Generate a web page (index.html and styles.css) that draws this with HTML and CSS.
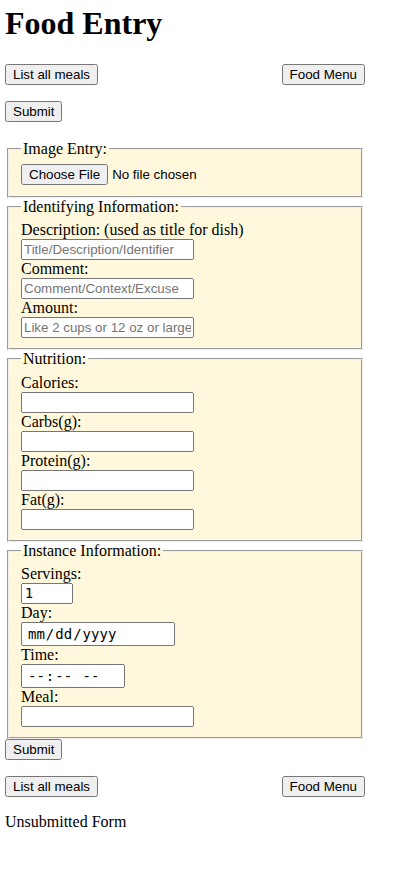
FILE: index.html
```html
<!DOCTYPE html>
<html>
<head>
<meta charset="utf-8">
<title>Food Entry</title>
<link rel="stylesheet" href="styles.css">
</head>
<body>
<div class="page">
  <h1 class="title">Food Entry</h1>
  <div class="nav">
    <button type="button" class="btn">List all meals</button>
    <button type="button" class="btn">Food Menu</button>
  </div>
  <form class="entry-form">
    <div class="submit-row"><button type="submit" class="btn">Submit</button></div>
    <fieldset class="group group-image">
      <legend class="group-legend">Image Entry:</legend>
      <input type="file" class="file-input">
    </fieldset>
    <fieldset class="group">
      <legend class="group-legend">Identifying Information:</legend>
      <label class="field-label">Description: (used as title for dish)</label><br>
      <input type="text" class="text-input" placeholder="Title/Description/Identifier"><br>
      <label class="field-label">Comment:</label><br>
      <input type="text" class="text-input" placeholder="Comment/Context/Excuse"><br>
      <label class="field-label">Amount:</label><br>
      <input type="text" class="text-input" placeholder="Like 2 cups or 12 oz or large">
    </fieldset>
    <fieldset class="group">
      <legend class="group-legend">Nutrition:</legend>
      <label class="field-label">Calories:</label><br>
      <input type="text" class="text-input"><br>
      <label class="field-label">Carbs(g):</label><br>
      <input type="text" class="text-input"><br>
      <label class="field-label">Protein(g):</label><br>
      <input type="text" class="text-input"><br>
      <label class="field-label">Fat(g):</label><br>
      <input type="text" class="text-input">
    </fieldset>
    <fieldset class="group">
      <legend class="group-legend">Instance Information:</legend>
      <label class="field-label">Servings:</label><br>
      <input type="number" class="num-input" value="1"><br>
      <label class="field-label">Day:</label><br>
      <input type="date" class="mono-input date-input"><br>
      <label class="field-label">Time:</label><br>
      <input type="time" class="mono-input time-input"><br>
      <label class="field-label">Meal:</label><br>
      <input type="text" class="text-input">
    </fieldset>
    <button type="submit" class="btn">Submit</button>
  </form>
  <div class="nav">
    <button type="button" class="btn">List all meals</button>
    <button type="button" class="btn">Food Menu</button>
  </div>
  <p class="status">Unsubmitted Form</p>
</div>
</body>
</html>
```

FILE: styles.css
```css
body {
  margin: 5px;
  font-family: "Liberation Serif", serif;
  font-size: 16px;
  color: #000;
  background: #fff;
}
.page {
  width: 360px;
}
.title {
  margin: 0 0 22px;
  font-size: 32px;
  line-height: 37px;
  font-weight: bold;
}
.nav {
  display: flex;
  justify-content: space-between;
  align-items: flex-start;
  margin: 16px 0;
}
.submit-row {
  margin: 0 0 18px;
}
.entry-form {
  margin: 0;
}
.btn,
.file-input,
.text-input {
  font-family: "Liberation Sans", Arial, sans-serif;
  font-size: 13.333px;
}
.btn {
  box-sizing: border-box;
  height: 21px;
}
.text-input {
  box-sizing: border-box;
  width: 173px;
  padding: 1px 1px;
}
.group {
  margin: 0 2px;
  background: #fff8dc;
}
.group-image {
  padding-bottom: 11px;
}
.group-legend {
  font-family: "Liberation Serif", serif;
}
.num-input,
.mono-input {
  font-family: "DejaVu Sans Mono", monospace;
  font-size: 13.333px;
  box-sizing: border-box;
}
.num-input {
  width: 52px;
}
.mono-input {
  height: 24px;
  font-size: 14px;
  padding: 1px 4px;
}
.date-input {
  width: 154px;
}
.time-input {
  width: 104px;
}
.mono-input::-webkit-calendar-picker-indicator {
  display: none;
}
.status {
  margin: 16px 0;
}
```
